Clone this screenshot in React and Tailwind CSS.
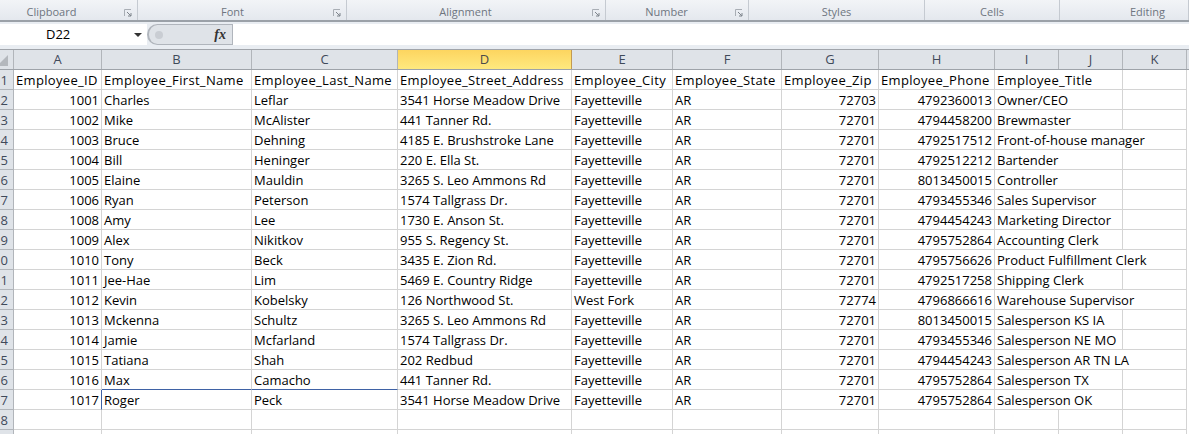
const columns = [
  { name: "A", width: "w-[88px]" },
  { name: "B", width: "w-[150px]" },
  { name: "C", width: "w-[146px]" },
  { name: "D", width: "w-[174px]", active: true },
  { name: "E", width: "w-[101px]" },
  { name: "F", width: "w-[109px]" },
  { name: "G", width: "w-[97px]" },
  { name: "H", width: "w-[116px]" },
  { name: "I", width: "w-[64px]" },
  { name: "J", width: "w-[64px]" },
  { name: "K", width: "w-[64px]" },
];

const rows = [
  ["Employee_ID", "Employee_First_Name", "Employee_Last_Name", "Employee_Street_Address", "Employee_City", "Employee_State", "Employee_Zip", "Employee_Phone", "Employee_Title"],
  ["1001", "Charles", "Leflar", "3541 Horse Meadow Drive", "Fayetteville", "AR", "72703", "4792360013", "Owner/CEO"],
  ["1002", "Mike", "McAlister", "441 Tanner Rd.", "Fayetteville", "AR", "72701", "4794458200", "Brewmaster"],
  ["1003", "Bruce", "Dehning", "4185 E. Brushstroke Lane", "Fayetteville", "AR", "72701", "4792517512", "Front-of-house manager"],
  ["1004", "Bill", "Heninger", "220 E. Ella St.", "Fayetteville", "AR", "72701", "4792512212", "Bartender"],
  ["1005", "Elaine", "Mauldin", "3265 S. Leo Ammons Rd", "Fayetteville", "AR", "72701", "8013450015", "Controller"],
  ["1006", "Ryan", "Peterson", "1574 Tallgrass Dr.", "Fayetteville", "AR", "72701", "4793455346", "Sales Supervisor"],
  ["1008", "Amy", "Lee", "1730 E. Anson St.", "Fayetteville", "AR", "72701", "4794454243", "Marketing Director"],
  ["1009", "Alex", "Nikitkov", "955 S. Regency St.", "Fayetteville", "AR", "72701", "4795752864", "Accounting Clerk"],
  ["1010", "Tony", "Beck", "3435 E. Zion Rd.", "Fayetteville", "AR", "72701", "4795756626", "Product Fulfillment Clerk"],
  ["1011", "Jee-Hae", "Lim", "5469 E. Country Ridge", "Fayetteville", "AR", "72701", "4792517258", "Shipping Clerk"],
  ["1012", "Kevin", "Kobelsky", "126 Northwood St.", "West Fork", "AR", "72774", "4796866616", "Warehouse Supervisor"],
  ["1013", "Mckenna", "Schultz", "3265 S. Leo Ammons Rd", "Fayetteville", "AR", "72701", "8013450015", "Salesperson KS IA"],
  ["1014", "Jamie", "Mcfarland", "1574 Tallgrass Dr.", "Fayetteville", "AR", "72701", "4793455346", "Salesperson NE MO"],
  ["1015", "Tatiana", "Shah", "202 Redbud", "Fayetteville", "AR", "72701", "4794454243", "Salesperson AR TN LA"],
  ["1016", "Max", "Camacho", "441 Tanner Rd.", "Fayetteville", "AR", "72701", "4795752864", "Salesperson TX"],
  ["1017", "Roger", "Peck", "3541 Horse Meadow Drive", "Fayetteville", "AR", "72701", "4795752864", "Salesperson OK"],
  [],
  [],
];

const groups = [
  { label: "Clipboard", box: "w-[138px] pr-[34px]", launcher: true },
  { label: "Font", box: "w-[209px] pr-[19px]", launcher: true },
  { label: "Alignment", box: "w-[259px] pr-[21px]", launcher: true },
  { label: "Number", box: "w-[143px] pr-[21px]", launcher: true },
  { label: "Styles", box: "w-[176px]" },
  { label: "Cells", box: "w-[135px]" },
  { label: "Editing", box: "w-[129px] pl-[47px]" },
];

function Launcher() {
  return (
    <svg width="8" height="8" viewBox="0 0 8 8" className="absolute right-[5px] top-[9px]">
      <path d="M0.5 7V0.5H7" fill="none" stroke="#a9aeb5" />
      <path d="M3 3L7 7M7 4V7H4" fill="none" stroke="#7d838b" />
    </svg>
  );
}

function Cell({ col, row, value, title }) {
  const alignRight = (col === 0 || col === 6 || col === 7) && row > 0;
  // the title text runs over the I and J gridlines, so those are hidden
  const noBorder = (col === 8 && title) || (col === 9 && title && title.length >= 20);
  return (
    <div
      className={`${columns[col].width} h-5 shrink-0 border-b border-[#d4d4d4] px-[2px] whitespace-nowrap text-[13px] leading-[20px] text-black ${
        noBorder ? "" : "border-r"
      } ${alignRight ? "text-right" : "text-left"} ${row === 0 ? "tracking-[0.33px]" : ""} ${
        row === 15 && (col === 1 || col === 2) ? "border-b-[#3f62a5]" : ""
      } ${row === 16 && col === 0 ? "border-r-[#3f62a5]" : ""}`}
    >
      {value}
    </div>
  );
}

export default function App() {
  return (
    <div className="h-[434px] w-[1189px] overflow-hidden bg-white font-['Open_Sans','Liberation_Sans',sans-serif]">
      <div className="flex h-[22px] border-b-2 border-[#9ba1a8] bg-gradient-to-b from-[#f2f4f7] to-[#e4e8ee]">
        {groups.map((g) => (
          <div
            key={g.label}
            className={`${g.box} relative h-[20px] shrink-0 border-r border-[#c5cad1] text-center text-[11px] leading-[24px] text-[#6e7580]`}
          >
            {g.label}
            {g.launcher && <Launcher />}
          </div>
        ))}
      </div>
      <div className="flex h-[28px] border-b border-[#a0a4aa] bg-[#e9edf2] pt-[2px]">
        <div className="flex h-[21px] w-[147px] items-center bg-white pl-[46px] text-[13px] text-black">
          <span className="flex-1">D22</span>
          <span className="mr-[5px] border-x-[4px] border-t-[4px] border-x-transparent border-t-[#333]" />
        </div>
        <div className="flex h-[21px] w-[85px] items-center justify-between rounded-l-full border-y border-l-2 border-[#b0b5bc] bg-[#dfe3e8] pl-[6px] pr-[6px] text-[#333]">
          <span className="h-[8px] w-[8px] rounded-full bg-[#c9cdd3]" />
          <span className="font-['Liberation_Serif',serif] text-[14px] font-bold italic">fx</span>
        </div>
        <div className="h-[21px] flex-1 border-l border-[#b0b5bc] bg-white" />
      </div>
      <div className="flex h-[20px] border-b border-[#9ea3a9] bg-[#dfe3e8]">
        <div className="relative h-full w-[14px] shrink-0 border-r border-[#b1b5ba]">
          <svg width="13" height="19" viewBox="0 0 13 19" className="absolute left-0 top-0">
            <path d="M8 5V16H-3Z" fill="#b4b8bd" />
          </svg>
        </div>
        {columns.map((c) => (
          <div
            key={c.name}
            className={`${c.width} shrink-0 border-r text-center text-[13px] leading-[19px] ${
              c.active
                ? "border-[#c29a52] bg-gradient-to-b from-[#fdd55f] to-[#ffe97f] text-[#4a4a4a]"
                : "border-[#b1b5ba] text-[#3f4a5a]"
            }`}
          >
            {c.name}
          </div>
        ))}
      </div>
      {rows.map((cells, r) => (
        <div key={r} className="flex h-5">
          <div className="flex h-5 w-[14px] shrink-0 justify-end overflow-hidden border-r border-b border-[#b1b5ba] bg-[#dfe3e8] pr-[5px] text-[13px] leading-[20px] text-[#3f4a5a]">
            <span className="whitespace-nowrap">{r + 1}</span>
          </div>
          {columns.map((c, i) => (
            <Cell key={c.name} col={i} row={r} value={cells[i]} title={cells[8]} />
          ))}
        </div>
      ))}
    </div>
  );
}
